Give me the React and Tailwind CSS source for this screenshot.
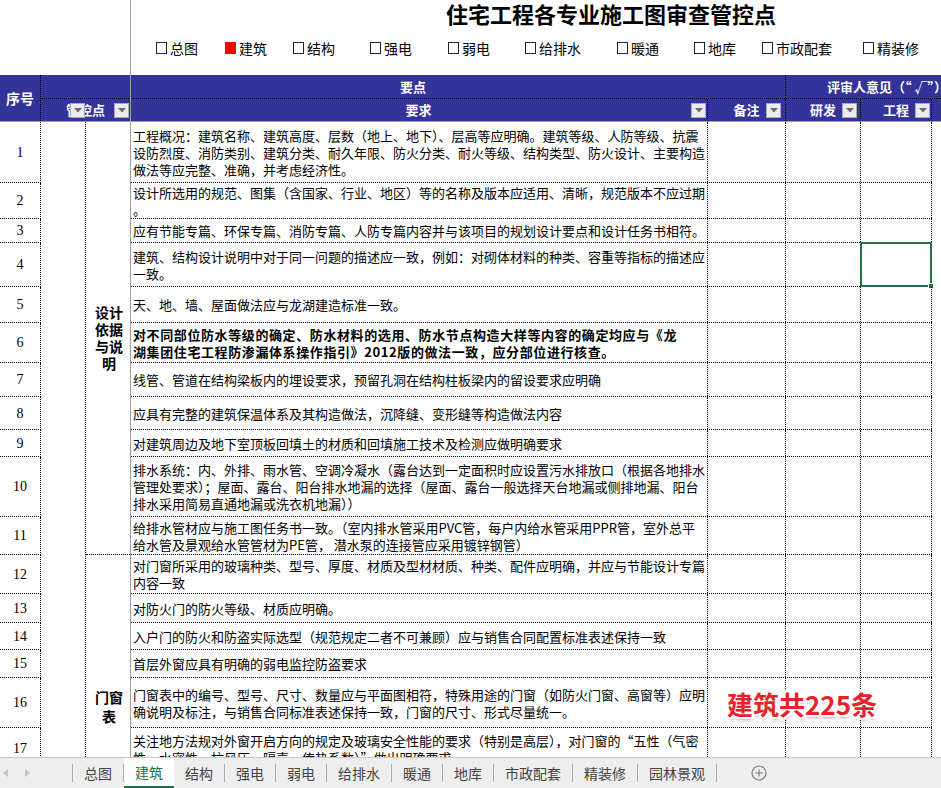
import React from 'react';

const rows = [
  { n: '1', h: 'h-[61px]', lines: ['工程概况：建筑名称、建筑高度、层数（地上、地下）、层高等应明确。建筑等级、人防等级、抗震', '设防烈度、消防类别、建筑分类、耐久年限、防火分类、耐火等级、结构类型、防火设计、主要构造', '做法等应完整、准确，并考虑经济性。'] },
  { n: '2', h: 'h-[36px]', lines: ['设计所选用的规范、图集（含国家、行业、地区）等的名称及版本应适用、清晰，规范版本不应过期', '。'] },
  { n: '3', h: 'h-[24px]', lines: ['应有节能专篇、环保专篇、消防专篇、人防专篇内容并与该项目的规划设计要点和设计任务书相符。'] },
  { n: '4', h: 'h-[44px]', lines: ['建筑、结构设计说明中对于同一问题的描述应一致，例如：对砌体材料的种类、容重等指标的描述应', '一致。'], sel: true },
  { n: '5', h: 'h-[36px]', lines: ['天、地、墙、屋面做法应与龙湖建造标准一致。'] },
  { n: '6', h: 'h-[40px]', lines: ['对不同部位防水等级的确定、防水材料的选用、防水节点构造大样等内容的确定均应与《龙', '湖集团住宅工程防渗漏体系操作指引》2012版的做法一致，应分部位进行核查。'], bold: true },
  { n: '7', h: 'h-[34px]', lines: ['线管、管道在结构梁板内的埋设要求，预留孔洞在结构柱板梁内的留设要求应明确'] },
  { n: '8', h: 'h-[33px]', lines: ['应具有完整的建筑保温体系及其构造做法，沉降缝、变形缝等构造做法内容'] },
  { n: '9', h: 'h-[27px]', lines: ['对建筑周边及地下室顶板回填土的材质和回填施工技术及检测应做明确要求'] },
  { n: '10', h: 'h-[60px]', lines: ['排水系统：内、外排、雨水管、空调冷凝水（露台达到一定面积时应设置污水排放口（根据各地排水', '管理处要求）；屋面、露台、阳台排水地漏的选择（屋面、露台一般选择天台地漏或侧排地漏、阳台', '排水采用简易直通地漏或洗衣机地漏））'] },
  { n: '11', h: 'h-[38px]', lines: ['给排水管材应与施工图任务书一致。（室内排水管采用PVC管，每户内给水管采用PPR管，室外总平', '给水管及景观给水管管材为PE管，  潜水泵的连接管应采用镀锌钢管）'] },
  { n: '12', h: 'h-[39px]', lines: ['对门窗所采用的玻璃种类、型号、厚度、材质及型材材质、种类、配件应明确，并应与节能设计专篇', '内容一致'] },
  { n: '13', h: 'h-[29px]', lines: ['对防火门的防火等级、材质应明确。'] },
  { n: '14', h: 'h-[27px]', lines: ['入户门的防火和防盗实际选型（规范规定二者不可兼顾）应与销售合同配置标准表述保持一致'] },
  { n: '15', h: 'h-[28px]', lines: ['首层外窗应具有明确的弱电监控防盗要求'] },
  { n: '16', h: 'h-[50px]', lines: ['门窗表中的编号、型号、尺寸、数量应与平面图相符，特殊用途的门窗（如防火门窗、高窗等）应明', '确说明及标注，与销售合同标准表述保持一致，门窗的尺寸、形式尽量统一。'] },
  { n: '17', h: 'h-[42px]', lines: ['关注地方法规对外窗开启方向的规定及玻璃安全性能的要求（特别是高层），对门窗的“五性（气密', '性、水密性、抗风压、隔声、传热系数）”做出明确要求。'] },
  { n: '18', h: 'h-[88px]', lines: ['门窗开启扇的位置、开启方式及尺寸应满足通风要求。'] },
];

const checks = [
  { label: '总图', w: 'w-[69px]' },
  { label: '建筑', w: 'w-[68px]', on: true },
  { label: '结构', w: 'w-[77px]' },
  { label: '强电', w: 'w-[78px]' },
  { label: '弱电', w: 'w-[77px]' },
  { label: '给排水', w: 'w-[92px]' },
  { label: '暖通', w: 'w-[77px]' },
  { label: '地库', w: 'w-[68px]' },
  { label: '市政配套', w: 'w-[101px]' },
  { label: '精装修', w: 'w-[70px]' },
];

const tabs = ['总图', '建筑', '结构', '强电', '弱电', '给排水', '暖通', '地库', '市政配套', '精装修', '园林景观'];

const DropBtn = ({ className }) => (
  <span className={`absolute top-[4px] w-[15px] h-[15px] bg-[#ececf0] border border-[#a9a9b8] flex items-center justify-center ${className}`}>
    <svg width="8" height="5" viewBox="0 0 8 5">
      <polygon points="0,0 8,0 4,4.5" fill="#6b6b6b" />
    </svg>
  </span>
);

export default function App() {
  return (
    <div className="relative w-[941px] h-[788px] overflow-hidden bg-white text-black font-['Noto_Sans_CJK_SC',sans-serif]">
      {/* title + discipline checkboxes */}
      <div className="flex h-[75px]">
        <div className="w-[130px] shrink-0" />
        <div className="flex-1 min-w-0 flex flex-col">
          <div className="h-[32px] pl-[316px] text-[22px] leading-[26px] font-bold whitespace-nowrap">
            住宅工程各专业施工图审查管控点
          </div>
          <div className="h-[43px] pl-[26px] pt-[7px] flex items-start text-[14px] leading-[18px]">
            {checks.map((c) => (
              <div key={c.label} className={`${c.w} shrink-0 h-[18px] flex items-center whitespace-nowrap`}>
                <span className={`w-[11px] h-[12px] mr-[3px] ${c.on ? 'bg-[#ff0000]' : 'border border-[#222]'}`} />
                <span>{c.label}</span>
              </div>
            ))}
          </div>
        </div>
      </div>

      {/* header */}
      <div className="flex h-[47px] bg-[#333399] text-white font-bold text-[13px] border-b border-[#9e9e9e]">
        <div className="w-[41px] shrink-0 border-r border-dotted border-black flex items-center justify-center text-[14px]">序号</div>
        <div className="flex-1 min-w-0 flex flex-col">
          <div className="h-[24px] flex border-b border-dotted border-black">
            <div className="w-[745px] shrink-0 border-r border-dotted border-black flex items-center justify-center">要点</div>
            <div className="flex-1 min-w-0 flex items-center pl-[41px] whitespace-nowrap overflow-hidden">评审人意见（“ √”）</div>
          </div>
          <div className="flex-1 flex">
            <div className="relative w-[89px] shrink-0 flex items-center justify-center">
              管控点
              <DropBtn className="left-[29px]" />
              <DropBtn className="left-[73px]" />
            </div>
            <div className="relative w-[578px] shrink-0 border-r border-dotted border-black flex items-center justify-center">
              要求
              <DropBtn className="right-[1px]" />
            </div>
            <div className="relative w-[78px] shrink-0 border-r border-dotted border-black flex items-center justify-center">
              备注
              <DropBtn className="right-[4px]" />
            </div>
            <div className="relative w-[75px] shrink-0 border-r border-dotted border-black flex items-center justify-center">
              研发
              <DropBtn className="right-[3px]" />
            </div>
            <div className="relative w-[71px] shrink-0 border-r border-dotted border-black flex items-center justify-center">
              工程
              <DropBtn className="right-[1px]" />
            </div>
            <div className="flex-1 min-w-0" />
          </div>
        </div>
      </div>

      {/* body */}
      <div className="flex h-[635px] overflow-hidden">
        <div className="w-[41px] flex flex-col shrink-0">
          {rows.map((r) => (
            <div key={r.n} className={`${r.h} shrink-0 border-b border-r border-dotted border-black flex items-center justify-center font-['Liberation_Serif',serif] text-[14px]`}>
              {r.n}
            </div>
          ))}
        </div>
        <div className="w-[45px] shrink-0 border-r border-dotted border-black" />
        <div className="w-[44px] shrink-0 flex flex-col font-bold text-[14px] leading-[17px]">
          <div className="h-[433px] shrink-0 border-b border-dotted border-black flex flex-col items-center justify-center pl-[2px]">
            <span>设计</span>
            <span>依据</span>
            <span>与说</span>
            <span>明</span>
          </div>
          <div className="h-[303px] shrink-0 flex flex-col items-center justify-center pl-[2px] leading-[19px]">
            <span>门窗</span>
            <span>表</span>
          </div>
        </div>
        <div className="w-[802px] shrink-0 flex flex-col">
          {rows.map((r) => (
            <div key={r.n} className={`${r.h} shrink-0 flex border-b border-dotted border-black`}>
              <div className={`w-[578px] shrink-0 border-r border-dotted border-black pl-[3px] flex flex-col justify-center text-[13px] leading-[17px] whitespace-nowrap overflow-hidden ${r.bold ? 'font-bold tracking-[0.6px]' : ''}`}>
                {r.lines.map((l, i) => (
                  <span key={i}>{l}</span>
                ))}
              </div>
              <div className="w-[78px] shrink-0 border-r border-dotted border-black" />
              <div className="w-[75px] shrink-0 border-r border-dotted border-black" />
              <div className="relative w-[71px] shrink-0 border-r border-dotted border-black">
                {r.sel && (
                  <div className="absolute -left-[1px] -top-[1px] w-[72px] h-[45px] border-2 border-[#217346]">
                    <span className="absolute -right-[4px] -bottom-[4px] w-[6px] h-[6px] bg-[#217346] border border-white" />
                  </div>
                )}
              </div>
            </div>
          ))}
        </div>
        <div className="flex-1 min-w-0" />
      </div>

      {/* sheet tabs */}
      <div className="h-[31px] flex items-center bg-[#eeeeee] border-t border-[#c8c8c8] text-[14px] text-[#444]">
        <div className="w-[72px] shrink-0 flex items-center pl-[3px] gap-[17px]">
          <svg width="5" height="8" viewBox="0 0 5 8"><polygon points="5,0 5,8 0,4" fill="#c4c4c4" /></svg>
          <svg width="5" height="8" viewBox="0 0 5 8"><polygon points="0,0 0,8 5,4" fill="#c4c4c4" /></svg>
        </div>
        <span className="w-px h-[18px] bg-[#ababab]" />
        {tabs.map((t) => (
          t === '建筑' ? (
            <div key={t} className="h-full px-[11px] bg-white text-[#217346] border-b-2 border-[#217346] flex items-center">
              {t}
            </div>
          ) : (
            <React.Fragment key={t}>
              <div className="h-full px-[11px] flex items-center">{t}</div>
              <span className="w-px h-[18px] bg-[#ababab]" />
            </React.Fragment>
          )
        ))}
        <div className="ml-[34px] flex items-center">
          <svg width="16" height="16" viewBox="0 0 16 16" fill="none" stroke="#7a7a7a" strokeWidth="1.2">
            <circle cx="8" cy="8" r="7" />
            <path d="M8 4.5v7M4.5 8h7" />
          </svg>
        </div>
      </div>

      {/* frozen pane divider */}
      <div className="absolute left-[130px] top-0 w-px h-[757px] bg-[#9e9e9e]" />

      {/* overlay label */}
      <div className="absolute left-[727px] top-[688px] text-[26px] leading-[32px] font-bold text-[#e8222a] whitespace-nowrap [text-shadow:2px_0_0_#fff,-2px_0_0_#fff,0_2px_0_#fff,0_-2px_0_#fff,2px_2px_0_#fff,-2px_-2px_0_#fff,2px_-2px_0_#fff,-2px_2px_0_#fff,1px_3px_3px_rgba(0,0,0,0.35)]">
        建筑共225条
      </div>
    </div>
  );
}
